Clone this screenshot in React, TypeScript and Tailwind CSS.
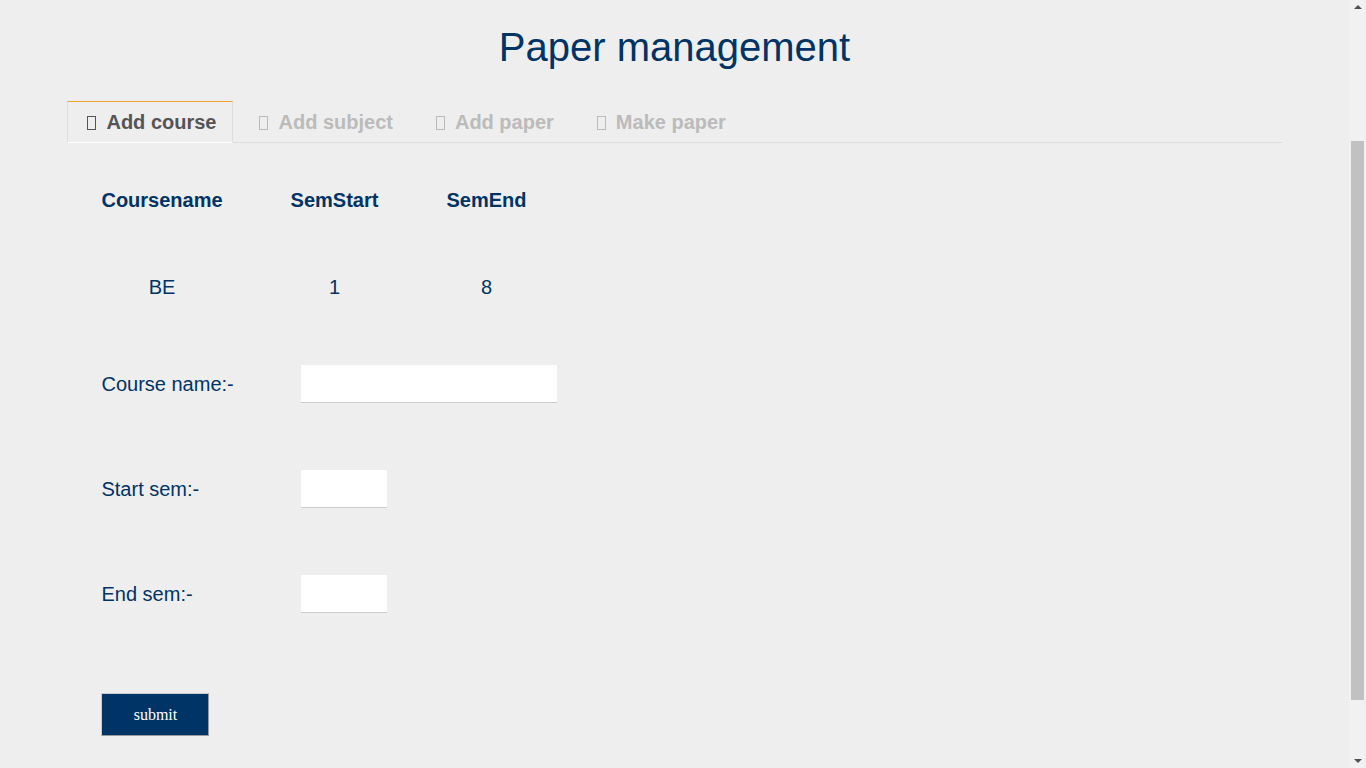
const tabs = ['Add course', 'Add subject', 'Add paper', 'Make paper'];

const fields = [
  { label: 'Course name:-', width: 'w-[256px]' },
  { label: 'Start sem:-', width: 'w-[86px]' },
  { label: 'End sem:-', width: 'w-[86px]' },
];

function Tofu() {
  return (
    <span className="mr-[10px] inline-block h-[14px] w-[9px] border border-current align-[-1px]" />
  );
}

// browser scrollbar as seen in the capture (page is scrolled part-way)
function Scrollbar() {
  return (
    <div className="flex h-screen w-[17px] shrink-0 flex-col items-center bg-[#f1f1f1]">
      <div className="mt-[5px] h-0 w-0 border-x-[4px] border-b-[4px] border-x-transparent border-b-[#505050]" />
      <div className="mt-[132px] h-[559px] w-[13px] bg-[#c1c1c1]" />
      <div className="mt-auto mb-[5px] h-0 w-0 border-x-[4px] border-t-[4px] border-x-transparent border-t-[#505050]" />
    </div>
  );
}

export default function App() {
  return (
    <div className="flex min-h-screen bg-[#eeeeee] font-['Liberation_Sans',Arial,sans-serif] text-[#003366]">
      <main className="w-[1349px] shrink-0">
        <div className="mx-auto w-[90%]">
          <h1 className="pt-[24px] text-center text-[40px] leading-[46px] font-normal">
            Paper management
          </h1>

          <div className="mt-[31px] flex border-b border-[#dddddd]">
            {tabs.map((tab, i) => (
              <div
                key={tab}
                className={`-mb-px border pt-[8px] pr-[16px] pb-[8px] pl-[19px] text-[20px] leading-[24px] font-bold ${
                  i === 0
                    ? 'border-[#dddddd] border-t-[#f0a22e] border-b-[#ffffff] text-[#555555]'
                    : 'ml-[6px] border-transparent text-[#bbbbbb]'
                }`}
              >
                <Tofu />
                {tab}
              </div>
            ))}
          </div>

          <table className="mt-[14px] border-collapse text-[20px] leading-[23px]">
            <thead>
              <tr>
                <th className="px-[34px] py-[32px] font-bold">Coursename</th>
                <th className="px-[34px] py-[32px] font-bold">SemStart</th>
                <th className="px-[34px] py-[32px] font-bold">SemEnd</th>
              </tr>
            </thead>
            <tbody>
              <tr>
                <td className="px-[34px] py-[32px] text-center">BE</td>
                <td className="px-[34px] py-[32px] text-center">1</td>
                <td className="px-[34px] py-[32px] text-center">8</td>
              </tr>
            </tbody>
          </table>

          <form className="mt-[34px] flex flex-col gap-[67px] pl-[34px]">
            {fields.map((f) => (
              <div key={f.label} className="flex h-[38px] items-center">
                <label className="w-[200px] text-[20px] leading-[23px]">{f.label}</label>
                <input
                  type="text"
                  className={`${f.width} h-[38px] border-b border-[#cccccc] bg-white outline-none`}
                />
              </div>
            ))}
            <div className="mt-[13px]">
              <button
                type="button"
                className="h-[43px] w-[108px] border border-t-[#cccccc] border-r-[#999999] border-b-[#999999] border-l-[#cccccc] bg-[#003366] font-['Liberation_Serif','Times_New_Roman',serif] text-[16px] text-white"
              >
                submit
              </button>
            </div>
          </form>
        </div>
      </main>
      <Scrollbar />
    </div>
  );
}
